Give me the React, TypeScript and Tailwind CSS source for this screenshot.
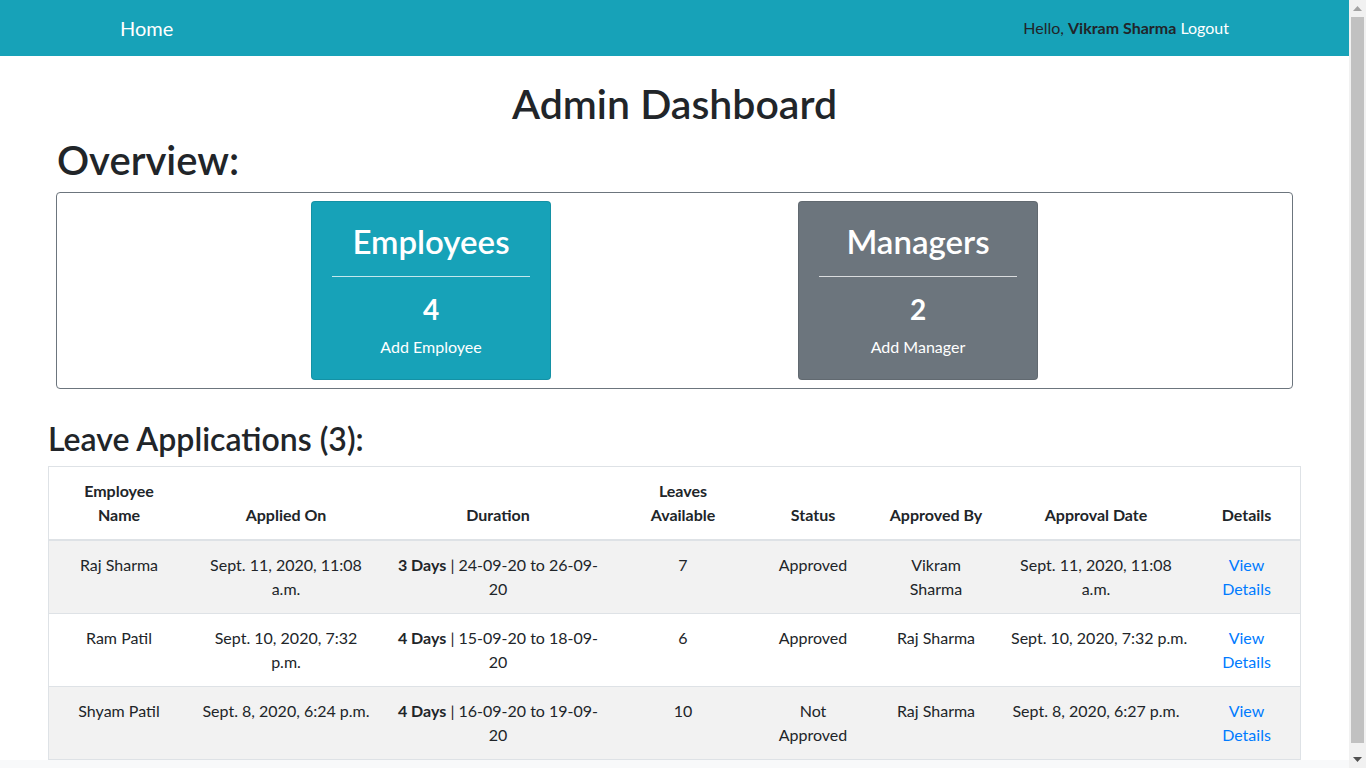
const font = { fontFamily: "Lato, 'Open Sans', sans-serif" };

const rows = [
  {
    name: "Raj Sharma",
    applied: ["Sept. 11, 2020, 11:08", "a.m."],
    days: "3 Days",
    range: ["24-09-20 to 26-09-", "20"],
    leaves: "7",
    status: ["Approved"],
    by: ["Vikram", "Sharma"],
    approval: ["Sept. 11, 2020, 11:08", "a.m."],
  },
  {
    name: "Ram Patil",
    applied: ["Sept. 10, 2020, 7:32", "p.m."],
    days: "4 Days",
    range: ["15-09-20 to 18-09-", "20"],
    leaves: "6",
    status: ["Approved"],
    by: ["Raj Sharma"],
    approval: ["Sept. 10, 2020, 7:32 p.m."],
  },
  {
    name: "Shyam Patil",
    applied: ["Sept. 8, 2020, 6:24 p.m."],
    days: "4 Days",
    range: ["16-09-20 to 19-09-", "20"],
    leaves: "10",
    status: ["Not", "Approved"],
    by: ["Raj Sharma"],
    approval: ["Sept. 8, 2020, 6:27 p.m."],
  },
];

const Lines = ({ items }: { items: string[] }) => (
  <>
    {items.map((t, i) => (
      <span key={i} className="block">
        {t}
      </span>
    ))}
  </>
);

const StatCard = ({
  title,
  count,
  action,
  bg,
}: {
  title: string;
  count: string;
  action: string;
  bg: string;
}) => (
  <div className={`w-[240px] rounded border border-black/10 p-5 text-center text-white ${bg}`}>
    <h2 className="text-[33px] font-semibold leading-[38px] mb-2">{title}</h2>
    <hr className="mt-4 mb-4 border-0 border-t border-white/75" />
    <h3 className="text-[28px] font-bold leading-[1.2] mb-2">{count}</h3>
    <p className="text-base leading-6">{action}</p>
  </div>
);

export default function App() {
  const th = "px-3 pt-3 pb-3 align-bottom font-bold text-center leading-6";
  const td = "px-3 py-3 align-top text-center leading-6 border-t border-[#dee2e6] whitespace-nowrap";
  return (
    <div className="flex h-screen w-full overflow-hidden bg-white text-[#212529]" style={font}>
      <div className="flex-1 min-w-0 overflow-hidden">
        {/* Navbar */}
        <nav className="h-14 bg-[#17a2b8] flex items-center justify-between px-[120px]">
          <a className="text-xl text-white leading-[30px]">Home</a>
          <div className="text-base">
            <span className="text-[#212529]">
              Hello, <b className="font-bold">Vikram Sharma</b>
            </span>{" "}
            <a className="text-white">Logout</a>
          </div>
        </nav>

        <h1 className="mt-6 mb-2 text-center text-[41px] font-semibold leading-[48px]">
          Admin Dashboard
        </h1>

        {/* Overview */}
        <div className="mx-14">
          <h1 className="mb-2 pl-px text-[40px] font-semibold leading-[48px]">Overview:</h1>
          <div className="border border-[#6c757d] rounded py-2 flex justify-center gap-[247px]">
            <StatCard title="Employees" count="4" action="Add Employee" bg="bg-[#17a2b8]" />
            <StatCard title="Managers" count="2" action="Add Manager" bg="bg-[#6c757d]" />
          </div>
        </div>

        {/* Leave applications */}
        <div className="mx-12 mt-[31px]">
          <h2 className="mb-2 text-[32px] font-semibold leading-[1.2]">Leave Applications (3):</h2>
          <div className="border border-[#dee2e6]">
            <table className="w-full table-fixed border-collapse text-base">
              <colgroup>
                <col className="w-[140px]" />
                <col className="w-[194px]" />
                <col className="w-[230px]" />
                <col className="w-[140px]" />
                <col className="w-[120px]" />
                <col className="w-[126px]" />
                <col className="w-[194px]" />
                <col className="w-[107px]" />
              </colgroup>
              <thead>
                <tr className="border-b-2 border-[#dee2e6]">
                  <th className={th}>
                    Employee
                    <br />
                    Name
                  </th>
                  <th className={th}>Applied On</th>
                  <th className={th}>Duration</th>
                  <th className={th}>
                    Leaves
                    <br />
                    Available
                  </th>
                  <th className={th}>Status</th>
                  <th className={th}>Approved By</th>
                  <th className={th}>Approval Date</th>
                  <th className={th}>Details</th>
                </tr>
              </thead>
              <tbody>
                {rows.map((r, i) => (
                  <tr key={r.name} className={i % 2 === 0 ? "bg-[#f2f2f2]" : "bg-white"}>
                    <td className={td}>{r.name}</td>
                    <td className={td}>
                      <Lines items={r.applied} />
                    </td>
                    <td className={td}>
                      <span className="block">
                        <b className="font-bold">{r.days}</b> | {r.range[0]}
                      </span>
                      <span className="block">{r.range[1]}</span>
                    </td>
                    <td className={td}>{r.leaves}</td>
                    <td className={td}>
                      <Lines items={r.status} />
                    </td>
                    <td className={td}>
                      <Lines items={r.by} />
                    </td>
                    <td className={td}>
                      <Lines items={r.approval} />
                    </td>
                    <td className={td}>
                      <a className="text-[#007bff] block">View</a>
                      <a className="text-[#007bff] block">Details</a>
                    </td>
                  </tr>
                ))}
              </tbody>
            </table>
          </div>
        </div>
        <div className="h-10 bg-[#f8f9fa]" />
      </div>

      {/* Scrollbar */}
      <div className="w-[17px] h-screen bg-[#f1f1f1] flex flex-col items-center">
        <div className="h-[17px] flex items-center justify-center">
          <svg width="9" height="5" viewBox="0 0 9 5">
            <path d="M0 5 L4.5 0 L9 5 Z" fill="#a3a3a3" />
          </svg>
        </div>
        <div className="w-[13px] h-[726px] bg-[#c1c1c1]" />
        <div className="flex-1" />
        <div className="h-[17px] flex items-center justify-center">
          <svg width="9" height="5" viewBox="0 0 9 5">
            <path d="M0 0 L9 0 L4.5 5 Z" fill="#505050" />
          </svg>
        </div>
      </div>
    </div>
  );
}
